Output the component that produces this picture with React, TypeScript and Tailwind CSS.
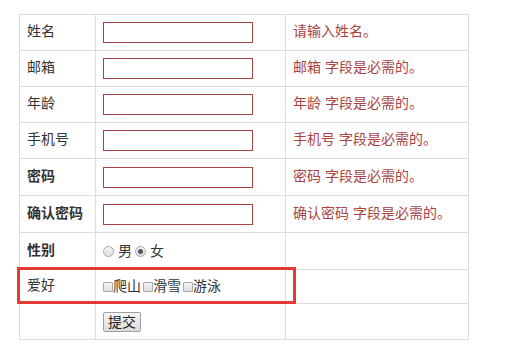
import React from "react";

const font = "font-['Liberation_Sans','Noto_Sans_CJK_SC',sans-serif]";

function Radio({ checked }: { checked?: boolean }) {
  return (
    <span className="flex h-[11px] w-[11px] items-center justify-center rounded-full border border-[#a9a9a9] bg-gradient-to-b from-[#f4f4f4] to-[#dedede]">
      {checked && <span className="h-[5px] w-[5px] rounded-full bg-[#555]" />}
    </span>
  );
}

function Checkbox() {
  return <span className="block h-[10px] w-[10px] rounded-[1px] border border-[#a9a9a9] bg-gradient-to-b from-[#f4f4f4] to-[#dedede]" />;
}

type Row = { label: string; bold?: boolean; h: string; kind: "input" | "radio" | "check" | "submit"; err?: string };

const rows: Row[] = [
  { label: "姓名", h: "h-[36px]", kind: "input", err: "请输入姓名。" },
  { label: "邮箱", h: "h-[36px]", kind: "input", err: "邮箱 字段是必需的。" },
  { label: "年龄", h: "h-[36px]", kind: "input", err: "年龄 字段是必需的。" },
  { label: "手机号", h: "h-[36px]", kind: "input", err: "手机号 字段是必需的。" },
  { label: "密码", bold: true, h: "h-[37px]", kind: "input", err: "密码 字段是必需的。" },
  { label: "确认密码", bold: true, h: "h-[37px]", kind: "input", err: "确认密码 字段是必需的。" },
  { label: "性别", bold: true, h: "h-[37px]", kind: "radio" },
  { label: "爱好", h: "h-[34px]", kind: "check" },
  { label: "", h: "h-[36px]", kind: "submit" },
];

export default function App() {
  return (
    <div className={`relative h-[362px] w-[530px] bg-white ${font} text-[14px] leading-[20px] text-[#333]`}>
      <div className="pl-[19px] pt-[14px]">
        <div className="grid w-[450px] grid-cols-[76px_190px_183px] border-l border-t border-[#dddddd]">
          {rows.map((r, i) => (
            <React.Fragment key={i}>
              <div className={`${r.h} flex items-center border-b border-r border-[#dddddd] pb-[3px] pl-[7px] ${r.bold ? "font-bold" : ""}`}>
                {r.label}
              </div>
              <div className={`${r.h} flex items-center border-b border-r border-[#dddddd] pl-[7px]`}>
                {r.kind === "input" && <div className="h-[21px] w-[150px] border border-[#a94442] bg-white" />}
                {r.kind === "radio" && (
                  <div className="flex items-center">
                    <Radio />
                    <span className="ml-[4px] mr-[3px]">男</span>
                    <Radio checked />
                    <span className="ml-[4px]">女</span>
                  </div>
                )}
                {r.kind === "check" && (
                  <div className="flex items-center">
                    <Checkbox />
                    <span className="mr-[2px] pb-[1px]">爬山</span>
                    <Checkbox />
                    <span className="mr-[2px] pb-[1px]">滑雪</span>
                    <Checkbox />
                    <span className="pb-[1px]">游泳</span>
                  </div>
                )}
                {r.kind === "submit" && (
                  <button className="h-[20px] w-[38px] rounded-[2px] border border-[#a0a0a0] bg-gradient-to-b from-[#f6f6f6] to-[#dcdcdc] text-[14px] leading-[18px] text-[#222]">
                    提交
                  </button>
                )}
              </div>
              <div className={`${r.h} flex items-center border-b border-r border-[#dddddd] pb-[3px] pl-[7px] text-[#a94442]`}>
                {r.err ?? ""}
              </div>
            </React.Fragment>
          ))}
        </div>
      </div>
      <div className="absolute left-[17px] top-[267px] h-[37px] w-[279px] border-[3px] border-[#e53935]" />
    </div>
  );
}
